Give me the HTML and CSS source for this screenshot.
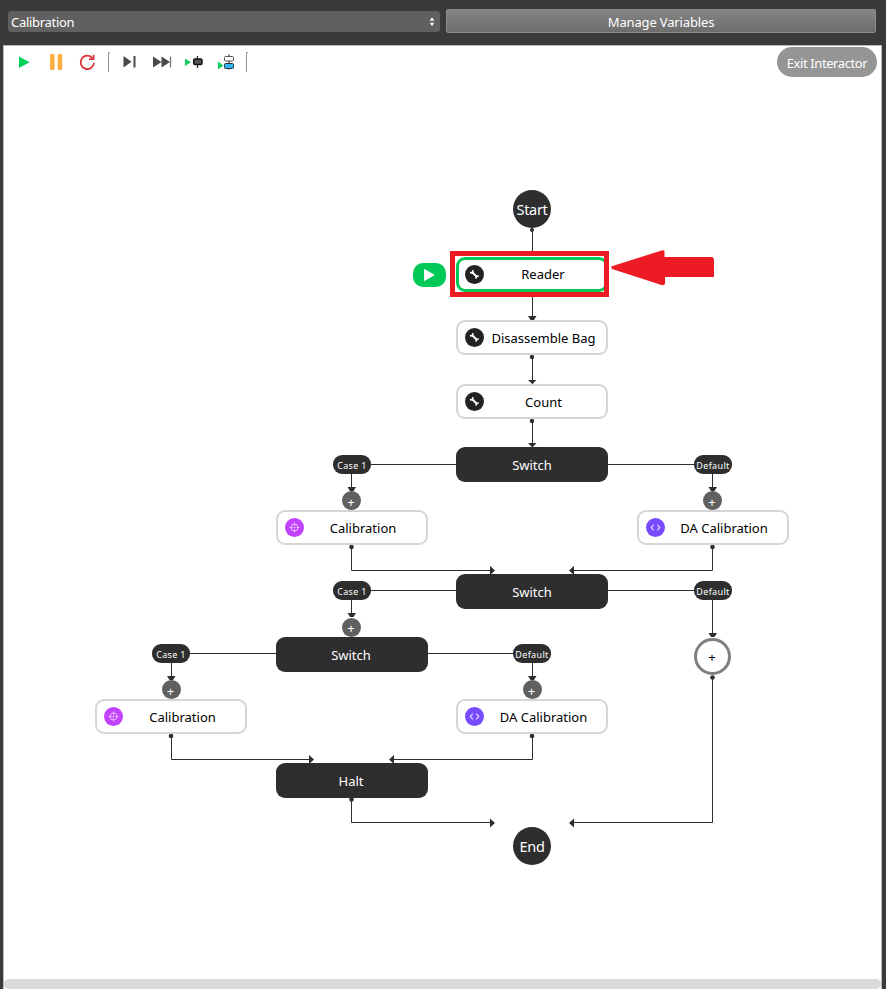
FILE: index.html
```
<!DOCTYPE html>
<html lang="en">
<head>
<meta charset="utf-8">
<title>Interactor</title>
<link rel="stylesheet" href="styles.css">
</head>
<body>
<svg class="defs" aria-hidden="true">
  <symbol id="wrench" viewBox="0 0 19 19"><path d="M7.2 7.2 11.800 11.800" stroke="#fff" stroke-width="2"/><path d="M5 7.600 7.400 7.900 8 5.200M11 13.600 11.500 11.400 13.800 11" fill="none" stroke="#fff" stroke-width="1.6"/></symbol>
  <symbol id="target" viewBox="0 0 19 19"><g fill="none" stroke="#eebcff" stroke-width="1"><circle cx="9.5" cy="9.5" r="3.5"/><path d="M9.5 4.5v3M9.5 11.5v3M4.5 9.5h3M11.5 9.5h3"/></g><circle cx="9.5" cy="9.5" r="1" fill="#eebcff"/></symbol>
  <symbol id="code" viewBox="0 0 19 19"><path d="M7.8 6.7 5.2 9.5 7.8 12.3M11.2 6.7 13.8 9.5 11.2 12.3" fill="none" stroke="#e0d5ff" stroke-width="1.2"/></symbol>
</svg>
<div class="app">
  <header class="topbar">
    <div class="select"><span>Calibration</span><svg width="6" height="12" viewBox="0 0 6 12"><path d="M0.8 4.7 3 1.2 5.2 4.7zM0.8 6.7 3 10.2 5.2 6.7z" fill="#fff"/></svg></div>
    <button class="manage">Manage Variables</button>
  </header>
  <main class="panel">
    <div class="toolbar">
      <svg class="tools" width="250" height="30" viewBox="0 0 250 30">
        <path d="M15 10.500v11.500l10.500-5.700z" fill="#00d157"/>
        <rect x="46" y="8" width="4.600" height="16" rx="1.300" fill="#ffae42"/><rect x="53.600" y="8" width="4.600" height="16" rx="1.300" fill="#ffae42"/>
        <path d="M88.600 12.200A6.700 6.700 0 1 0 90 16.800" fill="none" stroke="#dc3038" stroke-width="1.700"/><path d="M89.600 8.800v4.400h-4.700" fill="none" stroke="#dc3038" stroke-width="1.700"/>
        <path d="M104.500 26V6.500h1.500M242.500 26V6.500h1.500" fill="none" stroke="#929292"/>
        <path d="M119.500 10v11.500l8-5.700z" fill="#494949"/><path d="M130.500 10v11.500" stroke="#494949" stroke-width="2"/>
        <path d="M149 10.500v11l8.500-5.500zM157.500 10.500v11l8.500-5.500z" fill="#494949"/><path d="M166.500 10.500v11" stroke="#777" stroke-width="1.300"/>
        <path d="M181 12.500v7.500l6-3.700z" fill="#12cf5b"/><path d="M193.500 10v12" stroke="#333" stroke-width="1.300"/><rect x="189.700" y="13" width="8.300" height="5.500" rx="1.300" fill="#555" stroke="#111" stroke-width="1.500"/>
        <path d="M214 15.500v8l5.500-4z" fill="#12cf5b"/><path d="M225 8.500v15" stroke="#333" stroke-width="1.200"/><rect x="220.500" y="10.500" width="9" height="4.500" rx="1" fill="#fff" stroke="#555"/><rect x="220.500" y="17.500" width="9" height="5" rx="1" fill="#32b5f7" stroke="#333"/>
      </svg>
      <button class="exit">Exit Interactor</button>
    </div>
    <div class="scrollbar"></div>
  </main>
  <section class="flow">
    <svg class="edges" width="888" height="993" viewBox="0 0 888 993">
      <g fill="none" stroke="#2e2e2e">
        <path d="M532.500 228V255M532.500 293V320M532.500 356V384M532.500 421V447"/>
        <path d="M351.500 464.500H712.500M351.500 464V491M712.500 464V491"/>
        <path d="M351.500 546V570.500H490M712.500 546V570.500H574"/>
        <path d="M351.500 590.500H712.500M351.500 590V617M712.500 590V636"/>
        <path d="M171.500 653.500H532.500M171.500 653V680M532.500 653V680"/>
        <path d="M171.500 736V759.500H310M532.500 736V759.500H393"/>
        <path d="M351.500 799V822.500H490M712.500 677V822.500H574"/>
      </g>
      <g fill="#2e2e2e">
        <circle cx="532" cy="230" r="2"/><circle cx="532" cy="357" r="2.200"/><circle cx="532" cy="421" r="2.200"/>
        <circle cx="351.500" cy="547" r="2.300"/><circle cx="712.500" cy="547" r="2.300"/><circle cx="171" cy="736" r="2.300"/><circle cx="532" cy="736" r="2.300"/><circle cx="351.500" cy="799.500" r="2.300"/><circle cx="712.500" cy="677.500" r="2.300"/>
        <path d="M528 316h8.500l-2.500 4h-3.500zM528 380h8.500l-4.200 4zM528 443h8.500l-4.200 4.500z"/>
        <path d="M347.500 487h8.500l-2.500 4h-3.500zM708.500 487h8.500l-2.500 4h-3.500zM347.500 613h8.500l-2.500 4h-3.500zM708.500 633h8.500l-2.500 4h-3.500zM167 676h8.500l-2.500 4h-3.500zM528 676h8.500l-2.500 4h-3.500z"/>
        <path d="M490 566v9l5-4.500zM574 566v9l-5-4.500zM309 755v9l5-4.500zM394 755v9l-5-4.500zM490 818.500v9l5-4.500zM574 818.500v9l-5-4.500z"/>
      </g>
    </svg>
    <div class="end start-pos">Start</div>
    <div class="run"><svg width="33" height="24"><path d="M11.500 6.500v11l9.500-5.500z" fill="#fff" stroke="#fff" stroke-linejoin="round"/></svg></div>
    <div class="node task reader"><svg class="badge dark"><use href="#wrench"/></svg><span>Reader</span></div>
    <div class="highlight"></div>
    <svg class="arrow" width="105" height="38"><path d="M0 17.500 49 2Q52 .500 53.500 2V8H101.500L103 10V28H54V35Q52.500 37 49 35.500L1 20Z" fill="#ed1c24"/></svg>
    <div class="node task disassemble"><svg class="badge dark"><use href="#wrench"/></svg><span>Disassemble Bag</span></div>
    <div class="node task count"><svg class="badge dark"><use href="#wrench"/></svg><span>Count</span></div>
    <div class="node block switch-a">Switch</div>
    <div class="pill p1">Case 1</div><div class="pill p2">Default</div>
    <div class="plus a1">+</div><div class="plus a2">+</div>
    <div class="node task calib-a"><svg class="badge pink"><use href="#target"/></svg><span>Calibration</span></div>
    <div class="node task da-a"><svg class="badge violet"><use href="#code"/></svg><span>DA Calibration</span></div>
    <div class="node block switch-b">Switch</div>
    <div class="pill p3">Case 1</div><div class="pill p4">Default</div>
    <div class="plus a3">+</div><div class="ring">+</div>
    <div class="node block switch-c">Switch</div>
    <div class="pill p5">Case 1</div><div class="pill p6">Default</div>
    <div class="plus a4">+</div><div class="plus a5">+</div>
    <div class="node task calib-b"><svg class="badge pink"><use href="#target"/></svg><span>Calibration</span></div>
    <div class="node task da-b"><svg class="badge violet"><use href="#code"/></svg><span>DA Calibration</span></div>
    <div class="node block halt">Halt</div>
    <div class="end end-pos">End</div>
  </section>
</div>
</body>
</html>
```
FILE: styles.css
```
* { box-sizing: border-box; }
body { margin: 0; background: #fff; font-family: "Noto Sans", sans-serif; font-size: 13px; overflow: hidden; }
button { font: inherit; border: 0; padding: 0; }
.defs { position: absolute; width: 0; height: 0; }
.app { position: relative; width: 886px; height: 989px; background: #3a3a3a; display: flex; flex-direction: column; }
.topbar { height: 45px; padding: 9px 10px 0 8px; display: flex; gap: 6px; align-items: flex-start; }
.select { width: 432px; height: 21px; margin-top: 2px; padding: 0 5px 0 3px; border-radius: 3px; background: #606060; color: #fff; display: flex; justify-content: space-between; align-items: center; letter-spacing: -.3px; }
.manage { flex: 1; height: 24px; border: 1px solid #8b8b8b; border-radius: 2px; background: linear-gradient(#858585, #6d6d6d); color: #fff; letter-spacing: -.15px; padding-top: 2px; }
.panel { flex: 1; margin: 0 4px 0 3px; background: #fff; border: 1px solid #b9b9b9; border-bottom: 0; display: flex; flex-direction: column; justify-content: space-between; }
.toolbar { display: flex; justify-content: space-between; padding: 0 4px 0 0; }
.tools { display: block; }
.exit { width: 100px; height: 30px; margin-top: 1px; border-radius: 15px; background: #959595; color: #fff; padding-top: 1px; letter-spacing: -.4px; }
.scrollbar { height: 10px; border-radius: 5px; background: #dadada; }
.flow { position: absolute; inset: 0; pointer-events: none; }
.flow > * { position: absolute; }
.edges { left: 0; top: 0; }
.node { width: 152px; height: 35px; border-radius: 9px; display: flex; align-items: center; }
.task { background: #fff; border: 2px solid #d6d6d6; color: #000; padding-left: 7px; }
.task span { flex: 1; text-align: center; padding-right: 3px; white-space: nowrap; }
.block { background: #2e2e2e; color: #fff; justify-content: center; padding-top: 1px; }
.badge { width: 19px; height: 19px; border-radius: 50%; flex: none; }
.dark { background: #222; }
.pink { background: #c042ff; }
.violet { background: #784bff; }
.end { width: 38px; height: 38px; border-radius: 50%; background: #2e2e2e; color: #fff; font-size: 14.500px; letter-spacing: -.3px; display: flex; align-items: center; justify-content: center; }
.pill { width: 38px; height: 19px; border-radius: 9px; background: #2e2e2e; color: #fff; font-size: 9px; letter-spacing: .35px; display: flex; align-items: center; justify-content: center; white-space: nowrap; padding-top: 1px; }
.plus { width: 19px; height: 19px; border-radius: 50%; background: #606060; color: #fff; display: flex; align-items: center; justify-content: center; padding: 2px 1px 0 0; }
.ring { left: 694px; top: 637.500px; width: 37px; height: 37px; border: 3px solid #7f7f7f; border-radius: 50%; background: #fff; display: flex; align-items: center; justify-content: center; padding: 2px 1px 0 0; }
.run { left: 413px; top: 263px; width: 33px; height: 24px; border-radius: 10px; background: #00c957; }
.run svg { display: block; }
.reader { left: 456px; top: 257px; border-color: #00c957; border-width: 3px; padding-left: 6px; }
.reader span { padding-bottom: 2px; }
.highlight { left: 450px; top: 251px; width: 159px; height: 46px; border: 5px solid #ed1c24; }
.arrow { left: 611px; top: 249px; }
.start-pos { left: 513px; top: 190px; }
.end-pos { left: 513px; top: 826.500px; }
.disassemble { left: 456px; top: 320px; }
.count { left: 456px; top: 384px; }
.switch-a { left: 456px; top: 447px; }
.switch-b { left: 456px; top: 574px; }
.switch-c { left: 276px; top: 637px; padding: 0 2px 0 0; }
.halt { left: 276px; top: 763px; padding-right: 2px; }
.calib-a { left: 275.500px; top: 510px; }
.da-a { left: 636.500px; top: 510px; }
.calib-b { left: 95px; top: 699px; }
.da-b { left: 456px; top: 699px; }
.p1 { left: 333px; top: 455px; }
.p2 { left: 694px; top: 455px; }
.p3 { left: 333px; top: 581px; }
.p4 { left: 694px; top: 581px; }
.p5 { left: 152px; top: 644px; }
.p6 { left: 513px; top: 644px; }
.a1 { left: 342px; top: 491px; }
.a2 { left: 703px; top: 491px; }
.a3 { left: 342px; top: 617.500px; }
.a4 { left: 161.500px; top: 680px; }
.a5 { left: 522.500px; top: 680px; }
```
